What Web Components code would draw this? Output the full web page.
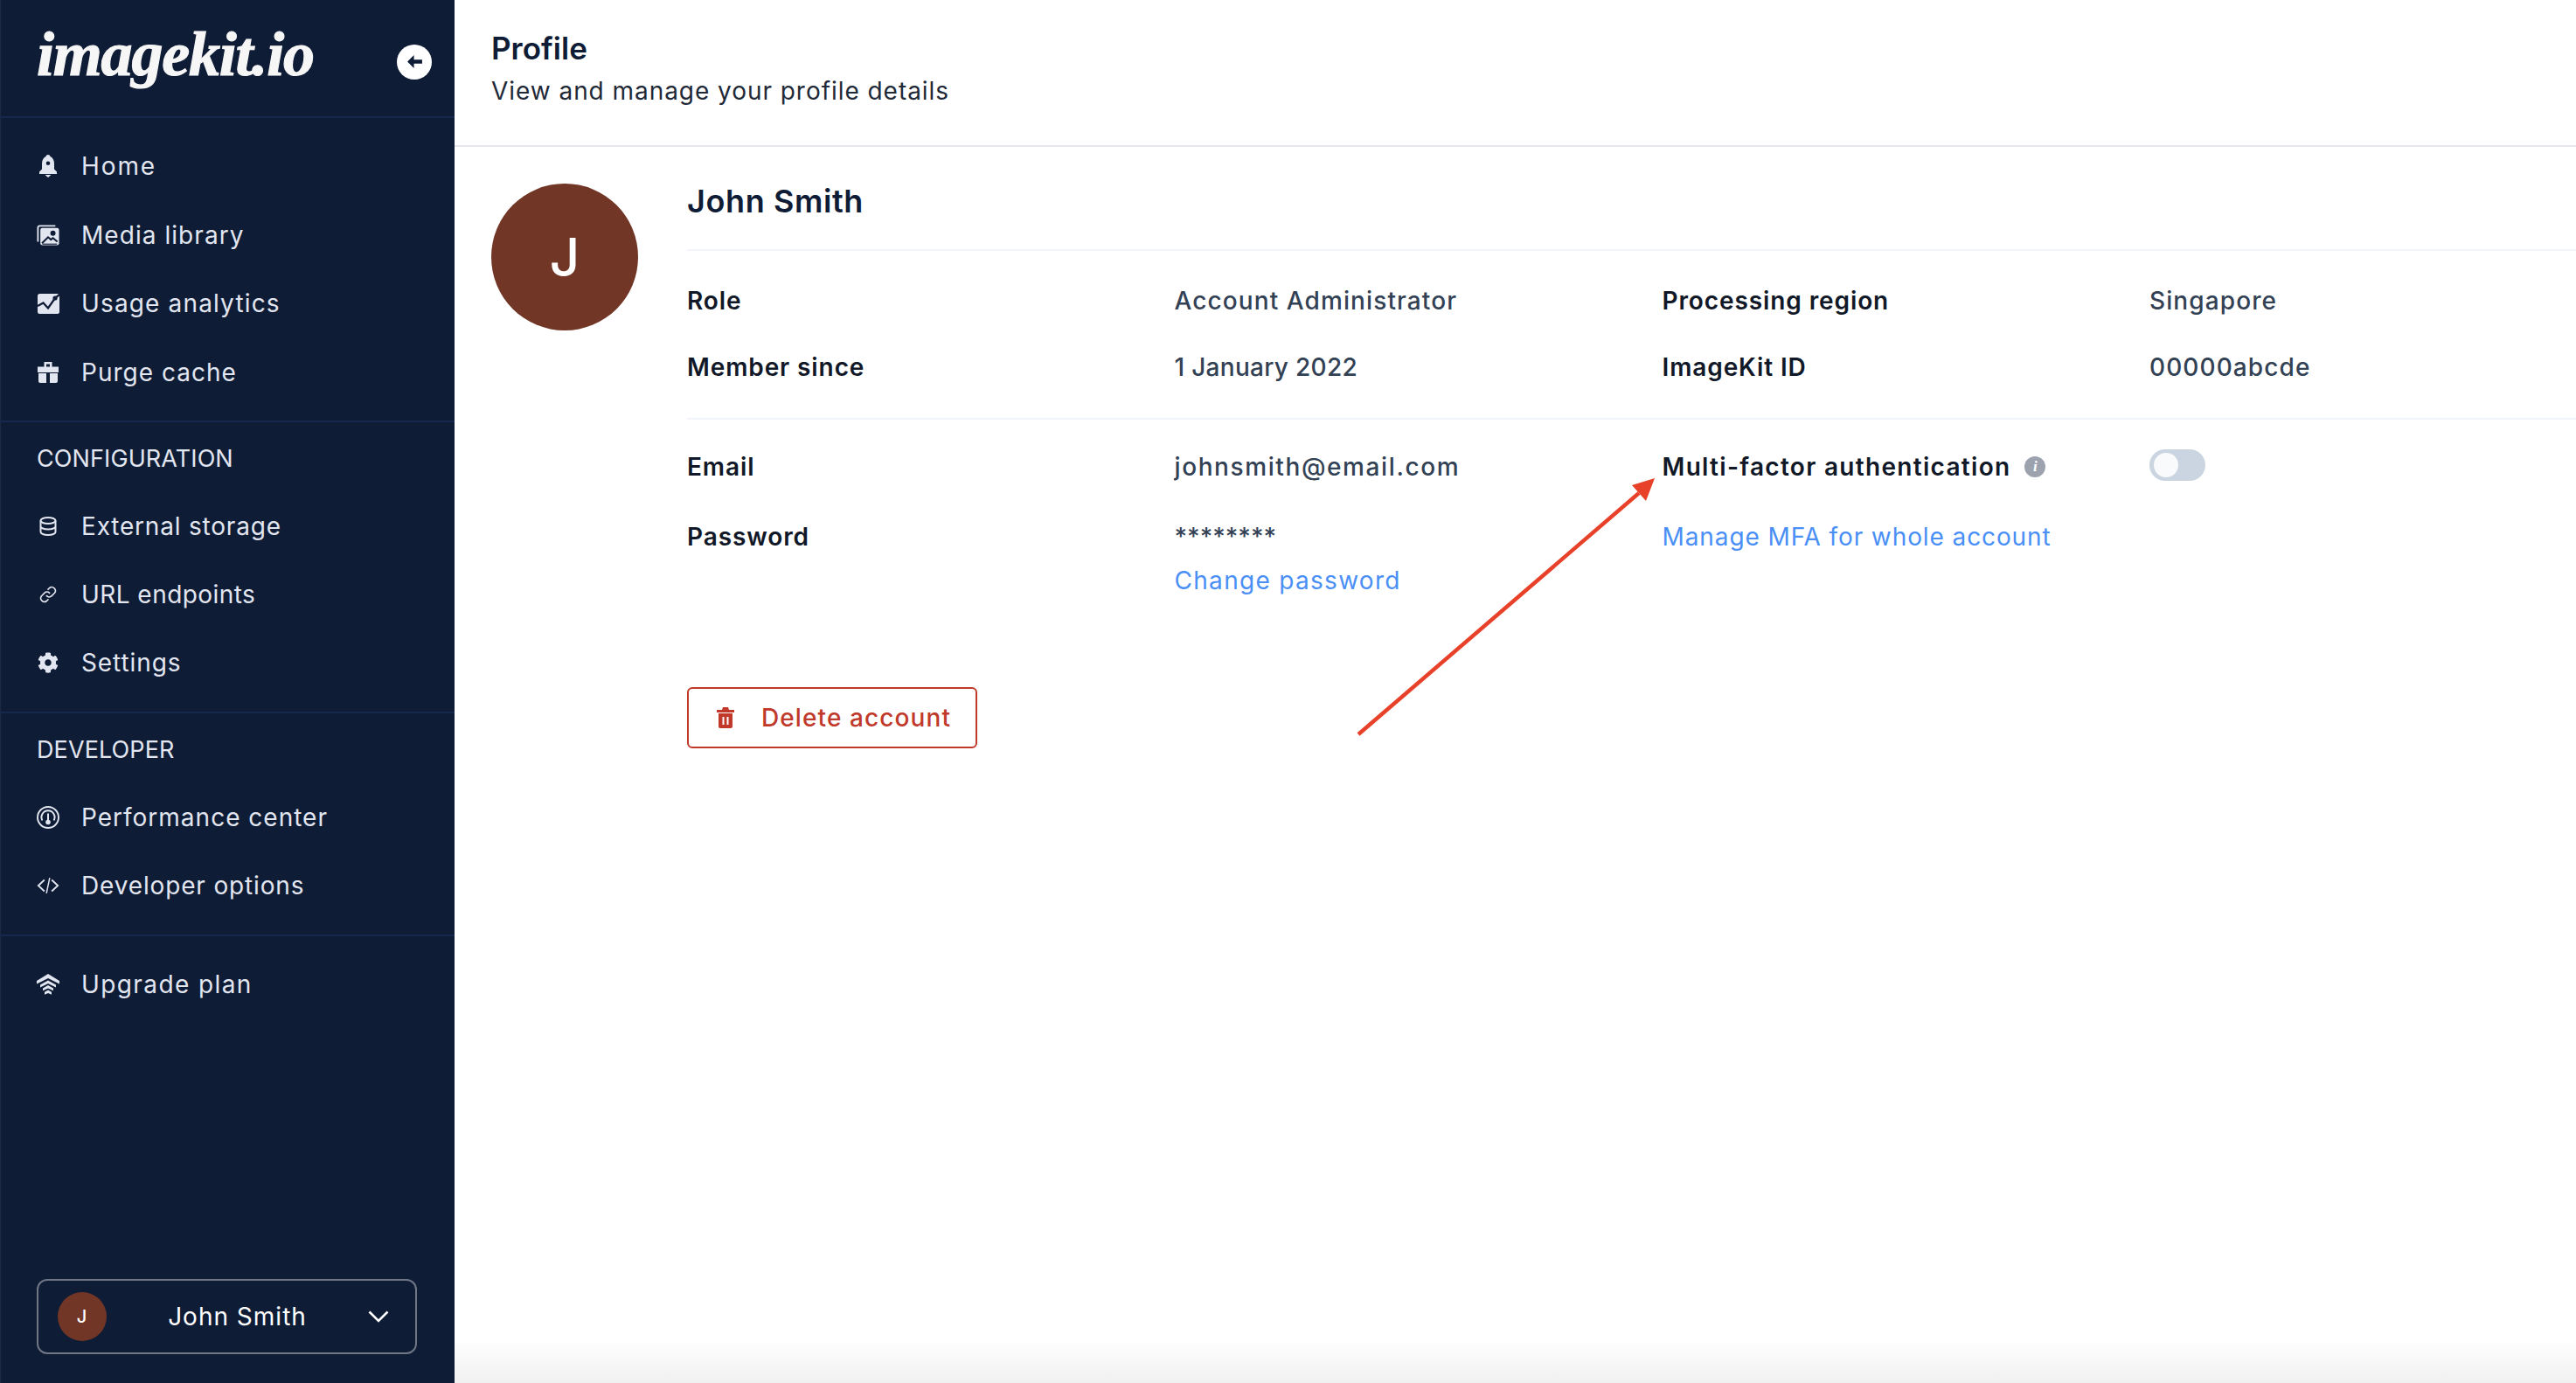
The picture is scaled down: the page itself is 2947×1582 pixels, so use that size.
<!DOCTYPE html>
<html lang="en">
<head>
<meta charset="utf-8">
<title>Profile</title>
<style>
  html, body { margin: 0; height: 100%; }
  body { font-family: Inter, "Noto Sans", sans-serif; font-size: 28px; overflow: hidden; }
</style>
</head>
<body>
<app-shell>
  <side-bar slot="side">
    <nav-section first>
      <nav-item label="Home" style="--ls:1.9px"><svg viewBox="0 0 20 26" width="20" height="26"><path fill="currentColor" fill-rule="evenodd" d="M10 0c1.300 0 2.300.9 2.500 2.100C15.500 3.500 17 6.500 17 10v6.500l3 3V22H0v-2.500l3-3V10c0-3.500 1.500-6.500 4.500-7.900C7.700.9 8.700 0 10 0zm0 7.500a2.300 2.300 0 1 0 0 4.600 2.300 2.300 0 0 0 0-4.600zM6.500 23h7L10 26z"/></svg></nav-item>
      <nav-item label="Media library" style="--ls:1.05px"><svg viewBox="0 0 28 26" width="28" height="26"><path fill="none" stroke="currentColor" stroke-width="2" d="M1.500 21V4C1.500 2.500 2.500 1.500 4 1.500h19"/><rect x="4.500" y="4" width="23" height="21.500" rx="2.500" fill="currentColor"/><circle cx="20" cy="10.500" r="3.200" fill="#0f1c36"/><path fill="none" stroke="#0f1c36" stroke-width="2.200" d="M6.500 23l7.500-7.500 3.500 3 2.500-2 5.500 4.500"/><path fill="none" stroke="#0f1c36" stroke-width="1.200" d="M7 24h18"/></svg></nav-item>
      <nav-item label="Usage analytics" style="--ls:1.15px"><svg viewBox="0 0 25 23" width="25" height="23"><rect width="25" height="23" rx="2.500" fill="currentColor"/><path fill="none" stroke="#0f1c36" stroke-width="2.300" d="M0 14l6.500-3.500L12 16.500 20 5l5-4"/><circle cx="20" cy="5" r="2.600" fill="#0f1c36"/></svg></nav-item>
      <nav-item label="Purge cache" style="--ls:1px"><svg viewBox="0 0 24 24" width="24" height="24"><path fill="currentColor" d="M7.500 0h9v5.500H24V12H0V5.500h7.500zM1 13h9v11H3c-1.200 0-2-.8-2-2zm13 0h9v9c0 1.200-.8 2-2 2h-7z"/><rect x="10" y="2.500" width="4" height="3" fill="#0f1c36"/></svg></nav-item>
    </nav-section>
    <nav-section>
      <nav-heading>CONFIGURATION</nav-heading>
      <nav-item label="External storage" style="--ls:0.8px"><svg viewBox="0 0 20 22" width="20" height="22"><g fill="none" stroke="currentColor" stroke-width="2"><ellipse cx="10" cy="4.500" rx="8.500" ry="3.500"/><path d="M1.500 4.500v13c0 2 3.800 3.500 8.500 3.500s8.500-1.500 8.500-3.500v-13M1.500 11c0 2 3.800 3.500 8.500 3.500s8.500-1.500 8.500-3.500"/></g></svg></nav-item>
      <nav-item label="URL endpoints" style="--ls:0.45px"><svg viewBox="0 0 24 24" width="20" height="20"><g fill="none" stroke="currentColor" stroke-width="1.900" stroke-linecap="round"><path d="M10 14a5 5 0 0 0 7 0l4-4a5 5 0 0 0-7-7l-2 2"/><path d="M14 10a5 5 0 0 0-7 0l-4 4a5 5 0 0 0 7 7l2-2"/></g></svg></nav-item>
      <nav-item label="Settings"><svg viewBox="0 0 512 512" width="24" height="24"><path fill="currentColor" d="M487.4 315.7l-42.6-24.6c4.3-23.2 4.3-47 0-70.2l42.6-24.6c4.900-2.800 7.100-8.600 5.500-14-11.100-35.600-30-67.800-54.700-94.600-3.800-4.100-10-5.100-14.800-2.300L380.800 110c-17.900-15.400-38.500-27.300-60.800-35.100V25.800c0-5.600-3.900-10.500-9.400-11.700-36.700-8.200-74.300-7.800-109.200 0-5.500 1.200-9.400 6.100-9.400 11.700V75c-22.200 7.900-42.800 19.800-60.800 35.100L88.700 85.500c-4.900-2.800-11-1.900-14.800 2.300-24.700 26.700-43.600 58.900-54.700 94.600-1.700 5.400.6 11.200 5.500 14L67.300 221c-4.300 23.200-4.300 47 0 70.200l-42.600 24.600c-4.900 2.800-7.100 8.600-5.500 14 11.100 35.600 30 67.800 54.700 94.600 3.800 4.100 10 5.100 14.800 2.300l42.600-24.600c17.900 15.400 38.500 27.300 60.800 35.100v49.200c0 5.600 3.900 10.500 9.400 11.700 36.700 8.200 74.300 7.800 109.200 0 5.500-1.200 9.400-6.100 9.400-11.700v-49.200c22.200-7.900 42.800-19.800 60.800-35.100l42.600 24.600c4.900 2.800 11 1.900 14.800-2.300 24.700-26.700 43.600-58.900 54.700-94.600 1.500-5.500-.7-11.300-5.600-14.100zM256 336c-44.100 0-80-35.900-80-80s35.900-80 80-80 80 35.900 80 80-35.900 80-80 80z"/></svg></nav-item>
    </nav-section>
    <nav-section>
      <nav-heading>DEVELOPER</nav-heading>
      <nav-item label="Performance center" style="--ls:1px"><svg viewBox="0 0 26 26" width="26" height="26"><g fill="none" stroke="currentColor" stroke-width="1.900"><circle cx="13" cy="13" r="12"/><path d="M6.500 16.500a7.500 7.500 0 1 1 13 0"/></g><circle cx="13" cy="18.500" r="2.800" fill="currentColor"/><path d="M12 8.500h2v9h-2z" fill="currentColor"/></svg></nav-item>
      <nav-item label="Developer options" style="--ls:0.85px"><svg viewBox="0 0 28 20" width="27" height="20"><g fill="none" stroke="currentColor" stroke-width="2"><path d="M9.500 3L2 10l7.500 7M18.500 3L26 10l-7.500 7"/><path stroke-width="1.600" d="M16 0.500l-4 19"/></g></svg></nav-item>
    </nav-section>
    <nav-section last>
      <nav-item label="Upgrade plan" style="--ls:1.4px"><svg viewBox="0 0 26 25" width="27" height="25"><path fill="currentColor" d="M13 0l13 8v3.500L13 5 0 11.500V8zM13 7.500l9 5v3L13 11l-9 4.500v-3zM13 13l6 3.500v2.800L13 16.500 7 19.300v-2.800zM13 18.500l4 2.300v3L13 22l-4 1.800v-3z"/></svg></nav-item>
    </nav-section>
    <user-menu name="John Smith"></user-menu>
  </side-bar>

  <page-header title="Profile" subtitle="View and manage your profile details"></page-header>

  <profile-panel name="John Smith" initial="J">
    <detail-grid>
      <detail-row label="Role">Account Administrator</detail-row>
      <detail-row label="Processing region">Singapore</detail-row>
      <detail-row label="Member since" style="--ls:0.3px">1 January 2022</detail-row>
      <detail-row label="ImageKit ID">00000abcde</detail-row>
    </detail-grid>
    <detail-grid second>
      <detail-row label="Email" style="--ls:1.6px">johnsmith@email.com</detail-row>
      <detail-row label="Multi-factor authentication" info style="--lls:1.3px"><mfa-toggle></mfa-toggle></detail-row>
      <detail-row label="Password" style="--ls:0"><div>********</div><text-link block>Change password</text-link></detail-row>
      <detail-row><text-link slot="labelslot">Manage MFA for whole account</text-link></detail-row>
    </detail-grid>
    <delete-button>Delete account</delete-button>
  </profile-panel>
  <note-arrow></note-arrow>
</app-shell>

<script>
// Outer frame: sidebar on the left, page content on the right
class AppShell extends HTMLElement {
  constructor() {
    super();
    this.attachShadow({ mode: 'open' });
    this.shadowRoot.innerHTML = `
      <style>
        :host { display: grid; grid-template-columns: 520px minmax(0, 1fr); grid-template-rows: 168px 1fr; height: 1582px; position: relative;
                background: linear-gradient(to bottom, #fff calc(100% - 50px), #f0f0f0); }
        ::slotted([slot=side]) { grid-row: 1 / span 2; }
      </style>
      <slot name="side"></slot>
      <slot></slot>
    `;
  }
}
customElements.define('app-shell', AppShell);

class SideBar extends HTMLElement {
  constructor() {
    super();
    this.attachShadow({ mode: 'open' });
    this.shadowRoot.innerHTML = `
      <style>
        :host { display: flex; flex-direction: column; background: #0f1c36; color: #e2e6f0; height: 1582px; box-sizing: border-box; box-shadow: inset 1px 0 #1b2a45; }
        .top { display: flex; align-items: center; justify-content: space-between; padding: 0 26px 0 42px; box-sizing: border-box; border-bottom: 2px solid #16274d; height: 135px; }
        .logo { font: italic bold 72px/1 "Liberation Serif", serif; color: #f6f6f6; letter-spacing: -1.2px; margin-top: -10px; -webkit-text-stroke: 1.2px #f6f6f6; }
        .back { width: 40px; height: 40px; border-radius: 50%; background: #fff; display: flex; align-items: center; justify-content: center; margin-top: 8px; }
        .rest { flex: 1; display: flex; flex-direction: column; }
      </style>
      <div class="top">
        <span class="logo">imagekit.io</span>
        <span class="back"><svg viewBox="0 0 18 16" width="17" height="15"><path fill="#0f1c36" d="M8 0v5.500h10v5H8V16L0 8z"/></svg></span>
      </div>
      <div class="rest"><slot></slot></div>
    `;
  }
}
customElements.define('side-bar', SideBar);

// A group of nav items with a divider below it
class NavSection extends HTMLElement {
  constructor() {
    super();
    this.attachShadow({ mode: 'open' });
    this.shadowRoot.innerHTML = `
      <style>
        :host { display: block; padding-bottom: 17px; border-bottom: 2px solid #16274d; }
        :host([first]) { padding-top: 16px; padding-bottom: 16px; --item: 78.5px; }
        :host([last]) { border-bottom: 0; padding-top: 16px; flex: 1; }
      </style>
      <slot></slot>
    `;
  }
}
customElements.define('nav-section', NavSection);

class NavHeading extends HTMLElement {
  constructor() {
    super();
    this.attachShadow({ mode: 'open' });
    this.shadowRoot.innerHTML = `
      <style>
        :host { display: flex; align-items: center; box-sizing: border-box; height: 80px; padding: 2px 0 0 42px; font: 400 27px "Inter", sans-serif; letter-spacing: 0.1px; color: #e2e6f0; }
      </style>
      <slot></slot>
    `;
  }
}
customElements.define('nav-heading', NavHeading);

class NavItem extends HTMLElement {
  constructor() {
    super();
    this.attachShadow({ mode: 'open' });
    this.shadowRoot.innerHTML = `
      <style>
        :host { display: flex; align-items: center; height: var(--item, 78px); padding-left: 42px; color: #e2e6f0; font: 400 28px "Inter", sans-serif; letter-spacing: var(--ls, 0.9px); }
        .icon { width: 26px; display: flex; justify-content: center; margin-right: 25px; }
      </style>
      <span class="icon"><slot></slot></span>
      <span class="label"></span>
    `;
  }
  connectedCallback() {
    this.shadowRoot.querySelector('.label').textContent = this.getAttribute('label');
  }
}
customElements.define('nav-item', NavItem);

class UserMenu extends HTMLElement {
  constructor() {
    super();
    this.attachShadow({ mode: 'open' });
    this.shadowRoot.innerHTML = `
      <style>
        :host { display: flex; align-items: center; margin: 0 43px 33px 42px; height: 86px; box-sizing: border-box; padding: 0 30px 0 22px;
                border: 2px solid #6f7686; border-radius: 12px; color: #fff; font: 400 28px "Inter", sans-serif; letter-spacing: 1px; }
        .pic { width: 56px; height: 56px; border-radius: 50%; background: #723626; display: flex; align-items: center; justify-content: center; font-size: 20px; font-weight: 500; }
        .name { flex: 1; text-align: center; }
      </style>
      <span class="pic">J</span>
      <span class="name"></span>
      <svg viewBox="0 0 24 14" width="24" height="14"><path d="M1.500 1.500L12 12 22.500 1.500" fill="none" stroke="#fff" stroke-width="2.600"/></svg>
    `;
  }
  connectedCallback() {
    this.shadowRoot.querySelector('.name').textContent = this.getAttribute('name');
  }
}
customElements.define('user-menu', UserMenu);

class PageHeader extends HTMLElement {
  constructor() {
    super();
    this.attachShadow({ mode: 'open' });
    this.shadowRoot.innerHTML = `
      <style>
        :host { display: block; box-sizing: border-box; height: 168px; padding: 32px 0 0 42px; border-bottom: 2px solid #e5e7eb; }
        h1 { margin: 0; font: 600 35px/46px "Inter", sans-serif; color: #0f1c36; }
        p { margin: 4px 0 0; font: 400 28px/44px "Inter", sans-serif; letter-spacing: 0.95px; color: #1f2937; }
      </style>
      <h1></h1><p></p>
    `;
  }
  connectedCallback() {
    this.shadowRoot.querySelector('h1').textContent = this.getAttribute('title');
    this.shadowRoot.querySelector('p').textContent = this.getAttribute('subtitle');
  }
}
customElements.define('page-header', PageHeader);

class ProfilePanel extends HTMLElement {
  constructor() {
    super();
    this.attachShadow({ mode: 'open' });
    this.shadowRoot.innerHTML = `
      <style>
        :host { display: flex; gap: 56px; padding: 42px 0 0 42px; align-items: flex-start; }
        .pic { flex: none; width: 168px; height: 168px; border-radius: 50%; background: #723626; color: #fff; display: flex; align-items: center; justify-content: center; font: 500 60px "Inter", sans-serif; }
        .main { flex: 1; min-width: 0; }
        h2 { margin: 0; height: 77px; box-sizing: border-box; border-bottom: 2px solid #f1f5f9; font: 600 36px/40px "Inter", sans-serif; letter-spacing: 0.6px; color: #0f1c36; }
      </style>
      <div class="pic"></div>
      <div class="main"><h2></h2><slot></slot></div>
    `;
  }
  connectedCallback() {
    this.shadowRoot.querySelector('.pic').textContent = this.getAttribute('initial');
    this.shadowRoot.querySelector('h2').textContent = this.getAttribute('name');
  }
}
customElements.define('profile-panel', ProfilePanel);

// Two label/value pairs per line
class DetailGrid extends HTMLElement {
  constructor() {
    super();
    this.attachShadow({ mode: 'open' });
    this.shadowRoot.innerHTML = `
      <style>
        :host { display: grid; grid-template-columns: 1115.5px minmax(0, 1fr); row-gap: 32px; padding: 35px 0 36px; border-bottom: 2px solid #f1f5f9; }
        :host([second]) { row-gap: 36px; padding: 32px 0 0; border-bottom: 0; }
      </style>
      <slot></slot>
    `;
  }
}
customElements.define('detail-grid', DetailGrid);

// label + value pair, takes up two of the four columns
class DetailRow extends HTMLElement {
  constructor() {
    super();
    this.attachShadow({ mode: 'open' });
    this.shadowRoot.innerHTML = `
      <style>
        :host { display: grid; grid-template-columns: 557.5px minmax(0, 1fr); font: 500 28px/44px "Inter", sans-serif; letter-spacing: var(--ls, 1.1px); color: #334155; }
        .label { font-weight: 600; color: #111827; display: flex; align-items: center; gap: 16px; white-space: nowrap; height: 44px; letter-spacing: var(--lls, 0.9px); }
        .info { display: none; width: 24px; height: 24px; border-radius: 50%; background: #9ca3af; color: #fff; font: italic 700 17px/24px "Liberation Serif", serif; text-align: center; letter-spacing: 0; }
        :host([info]) .info { display: block; }
      </style>
      <div class="label"><slot name="labelslot"></slot><span class="lt"></span><span class="info">i</span></div>
      <div><slot></slot></div>
    `;
  }
  connectedCallback() {
    this.shadowRoot.querySelector('.lt').textContent = this.getAttribute('label') || '';
  }
}
customElements.define('detail-row', DetailRow);

class TextLink extends HTMLElement {
  constructor() {
    super();
    this.attachShadow({ mode: 'open' });
    this.shadowRoot.innerHTML = `
      <style>
        :host { display: inline; color: #4a8ff5; font: 400 28px/44px "Inter", sans-serif; letter-spacing: 0.9px; }
        :host([block]) { display: block; margin-top: 6px; letter-spacing: 1.3px; }
      </style>
      <slot></slot>
    `;
  }
}
customElements.define('text-link', TextLink);

class MfaToggle extends HTMLElement {
  constructor() {
    super();
    this.attachShadow({ mode: 'open' });
    this.shadowRoot.innerHTML = `
      <style>
        :host { display: block; width: 64px; height: 36px; margin-top: 2px; border-radius: 18px; background: #cbd5e1; position: relative; }
        i { position: absolute; left: 5px; top: 4px; width: 28px; height: 28px; border-radius: 50%; background: #f8fafc; }
      </style>
      <i></i>
    `;
  }
}
customElements.define('mfa-toggle', MfaToggle);

class DeleteButton extends HTMLElement {
  constructor() {
    super();
    this.attachShadow({ mode: 'open' });
    this.shadowRoot.innerHTML = `
      <style>
        :host { display: inline-flex; align-items: center; gap: 31px; box-sizing: border-box; width: 332px; height: 70px; margin-top: 100px; padding-left: 32px;
                border: 2px solid #c0392b; border-radius: 6px; color: #c0392b; font: 500 28px "Inter", sans-serif; letter-spacing: 1.1px; white-space: nowrap; }
      </style>
      <svg viewBox="0 0 20 24" width="20" height="24"><path fill="currentColor" d="M7 0h6l1 3h6v3H0V3h6zM2 7h16v15c0 1.200-.8 2-2 2H4c-1.200 0-2-.8-2-2z"/><path fill="#fff" d="M6.500 11h2v9h-2zM11.500 11h2v9h-2z"/></svg>
      <slot></slot>
    `;
  }
}
customElements.define('delete-button', DeleteButton);

// Red annotation arrow drawn over the page
class NoteArrow extends HTMLElement {
  constructor() {
    super();
    this.attachShadow({ mode: 'open' });
    this.shadowRoot.innerHTML = `
      <style>
        :host { position: absolute; left: 1540px; top: 540px; width: 360px; height: 310px; display: block; }
      </style>
      <svg viewBox="0 0 360 310" width="360" height="310">
        <path d="M14 300L335 24" stroke="#e8412a" stroke-width="4.500" fill="none"/>
        <path d="M353 7L327 15 343 33z" fill="#e8412a"/>
      </svg>
    `;
  }
}
customElements.define('note-arrow', NoteArrow);
</script>
</body>
</html>
